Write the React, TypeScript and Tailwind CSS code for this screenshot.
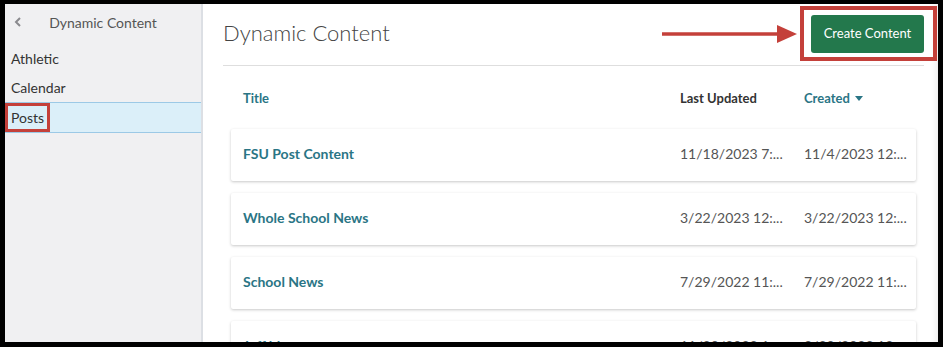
import * as React from 'react'

interface Row {
  title: string
  updated: string
  created: string
}

const rows: Row[] = [
  { title: 'FSU Post Content', updated: '11/18/2023 7:...', created: '11/4/2023 12:...' },
  { title: 'Whole School News', updated: '3/22/2023 12:...', created: '3/22/2023 12:...' },
  { title: 'School News', updated: '7/29/2022 11:...', created: '7/29/2022 11:...' },
  { title: 'Jeff blog', updated: '11/30/2023 1:...', created: '3/30/2023 12:...' },
]

const sideItems = ['Athletic', 'Calendar', 'Posts']

function Sidebar() {
  return (
    <aside className="flex w-[198px] shrink-0 flex-col border-r-2 border-[#dcdfe4] bg-[#f0f0f2]">
      <div className="relative flex h-[36px] items-center justify-center text-[14px] text-[#555]">
        <svg className="absolute left-[9px] top-[13px]" width="8" height="10" viewBox="0 0 8 10">
          <path d="M6 1 L2 5 L6 9" fill="none" stroke="#8a8a8e" strokeWidth="2" />
        </svg>
        <span>Dynamic Content</span>
      </div>
      <div className="mt-[4px] flex flex-col">
        {sideItems.map((item) => {
          const active = item === 'Posts'
          return (
            <div
              key={item}
              className={
                active
                  ? 'flex h-[31px] items-center border-y border-[#9cc9e6] bg-[#dbeff9] pb-[1px] pl-[6px] text-[14px] text-[#333]'
                  : 'flex h-[29px] items-center pb-[1px] pl-[6px] text-[14px] text-[#333]'
              }
            >
              {item}
            </div>
          )
        })}
      </div>
    </aside>
  )
}

function Card({ row }: { row: Row }) {
  return (
    <div className="flex h-[52px] shrink-0 items-center rounded-[2px] bg-white pb-[4px] pl-[12px] shadow-[0_1px_3px_rgba(0,0,0,0.22)]">
      <div className="flex-1 text-[14px] font-bold text-[#2a7585]">{row.title}</div>
      <div className="w-[124px] text-[14px] text-[#555]">{row.updated}</div>
      <div className="w-[112px] text-[14px] text-[#555]">{row.created}</div>
    </div>
  )
}

export default function App() {
  return (
    <div
      className="relative h-[347px] w-[943px] overflow-hidden bg-black pb-[5px] pl-[5px] pr-[5px] pt-[4px]"
      style={{ fontFamily: 'Lato, "Open Sans", sans-serif' }}
    >
      <div className="flex h-full overflow-hidden bg-white">
        <Sidebar />
        <main className="flex min-w-0 flex-1 flex-col shadow-[inset_-10px_0_10px_-10px_rgba(0,0,0,0.12)]">
          <div className="ml-[20px] mr-[14px] flex h-[62px] shrink-0 items-center justify-between border-b border-[#dedede]">
            <h1 className="mb-[4px] text-[22px] font-light text-[#444]">Dynamic Content</h1>
            <button
              type="button"
              className="mb-[2px] h-[38px] w-[113px] rounded-[3px] bg-[#23784c] text-[13px] text-white"
            >
              Create Content
            </button>
          </div>
          <div className="ml-[28px] mr-[22px] flex flex-col">
            <div className="flex h-[63px] items-center pl-[12px] pt-[3px] text-[13px] font-bold">
              <div className="flex-1 text-[#2a7585]">Title</div>
              <div className="w-[124px] text-[#333]">Last Updated</div>
              <div className="flex w-[112px] items-center gap-[5px] text-[#2a7585]">
                Created
                <svg width="8" height="6" viewBox="0 0 8 6">
                  <path d="M0 0 L8 0 L4 5 Z" fill="#2a7585" />
                </svg>
              </div>
            </div>
            <div className="flex flex-col gap-[12px]">
              {rows.map((r) => (
                <Card key={r.title} row={r} />
              ))}
            </div>
          </div>
        </main>
      </div>

      {/* annotations */}
      <div className="absolute left-[5px] top-[103px] h-[29px] w-[45px] border-[3px] border-[#c4403a]" />
      <div className="absolute left-[800px] top-[6px] h-[55px] w-[137px] border-[4px] border-[#c4403a]" />
      <svg className="absolute left-[660px] top-[23px]" width="140" height="22" viewBox="0 0 140 22">
        <path d="M2 11 L120 11" stroke="#c4403a" strokeWidth="3.5" />
        <path d="M117 2 L137 11 L117 20 Z" fill="#c4403a" />
      </svg>
    </div>
  )
}
